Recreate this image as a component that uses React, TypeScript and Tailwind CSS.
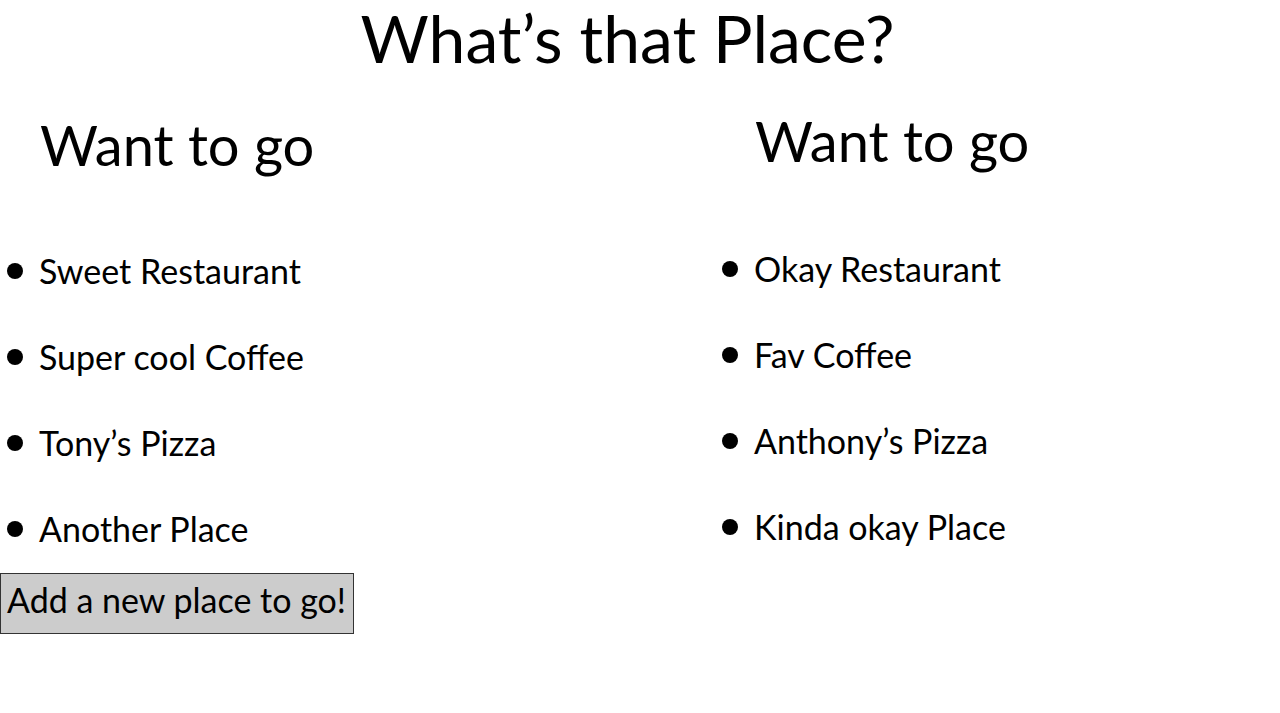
import React from "react";

const left = ["Sweet Restaurant", "Super cool Coffee", "Tony’s Pizza", "Another Place"];
const right = ["Okay Restaurant", "Fav Coffee", "Anthony’s Pizza", "Kinda okay Place"];

function Item({ text }: { text: string }) {
  return (
    <li className="flex items-center h-[86px]">
      <span className="w-4 h-4 rounded-full bg-black shrink-0 ml-[7px]" />
      <span className="ml-4 text-[34px] leading-none">{text}</span>
    </li>
  );
}

export default function App() {
  return (
    <div className="w-[1280px] h-[713px] bg-white text-black" style={{ fontFamily: "Lato, 'Open Sans', sans-serif" }}>
      <h1 className="text-center text-[66px] leading-[80px] -mt-[2px] pr-[25px]">What’s that Place?</h1>
      <div className="flex">
        <div className="w-[715px]">
          <h2 className="pl-[40px] text-[56px] leading-none mt-[39px]">Want to go</h2>
          <ul className="mt-[55px]">
            {left.map((t) => (
              <Item key={t} text={t} />
            ))}
          </ul>
          <button className="mt-[1px] h-[61px] w-[354px] border border-[#333] bg-[#cccccc] text-[34px] leading-none text-left pl-[6px] pb-[8px]">
            Add a new place to go!
          </button>
        </div>
        <div className="flex-1">
          <h2 className="pl-[40px] text-[56px] leading-none mt-[35px]">Want to go</h2>
          <ul className="mt-[57px]">
            {right.map((t) => (
              <Item key={t} text={t} />
            ))}
          </ul>
        </div>
      </div>
    </div>
  );
}
